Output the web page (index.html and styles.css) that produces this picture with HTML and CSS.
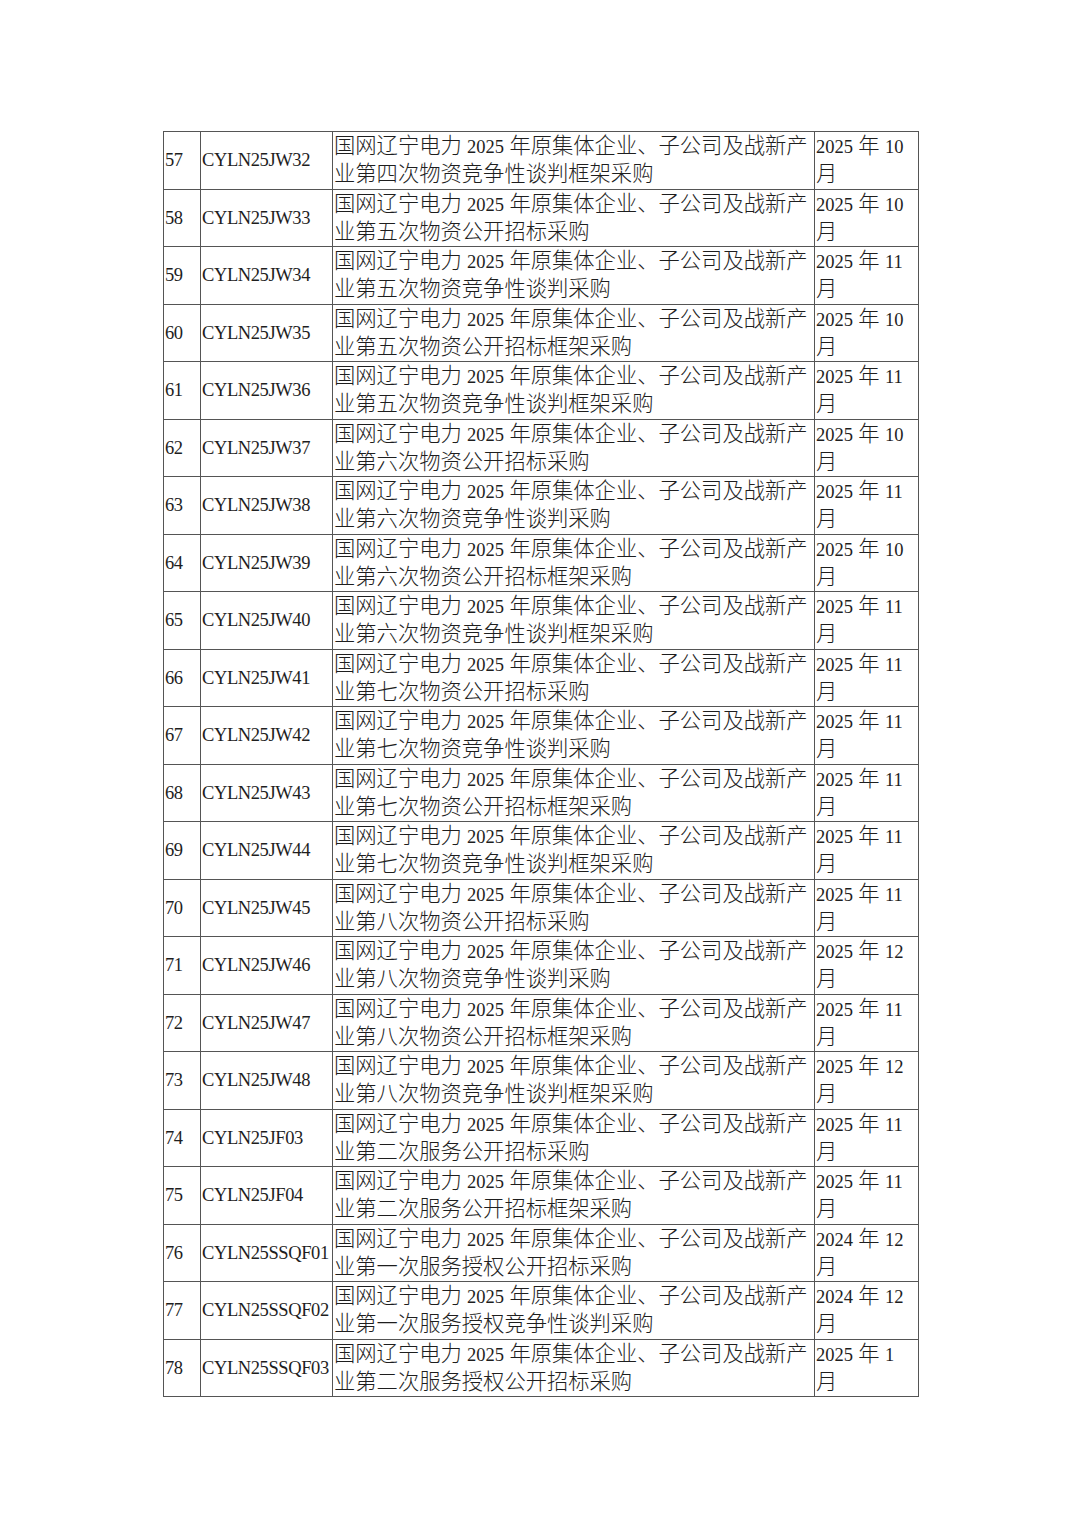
FILE: index.html
```html
<!DOCTYPE html>
<html lang="zh">
<head>
<meta charset="utf-8">
<link rel="stylesheet" href="styles.css">
</head>
<body>
<div class="page">
<table class="plan">
<colgroup><col class="c-no"><col class="c-code"><col class="c-name"><col class="c-date"></colgroup>
<tbody>
<tr><td class="no">57</td><td class="code">CYLN25JW32</td><td class="name">国网辽宁电力 <span class="lat">2025</span> 年原集体企业、子公司及战新产<br>业第四次物资竞争性谈判框架采购</td><td class="date"><span class="lat">2025</span> 年 <span class="lat">10</span><br>月</td></tr>
<tr><td class="no">58</td><td class="code">CYLN25JW33</td><td class="name">国网辽宁电力 <span class="lat">2025</span> 年原集体企业、子公司及战新产<br>业第五次物资公开招标采购</td><td class="date"><span class="lat">2025</span> 年 <span class="lat">10</span><br>月</td></tr>
<tr><td class="no">59</td><td class="code">CYLN25JW34</td><td class="name">国网辽宁电力 <span class="lat">2025</span> 年原集体企业、子公司及战新产<br>业第五次物资竞争性谈判采购</td><td class="date"><span class="lat">2025</span> 年 <span class="lat">11</span><br>月</td></tr>
<tr><td class="no">60</td><td class="code">CYLN25JW35</td><td class="name">国网辽宁电力 <span class="lat">2025</span> 年原集体企业、子公司及战新产<br>业第五次物资公开招标框架采购</td><td class="date"><span class="lat">2025</span> 年 <span class="lat">10</span><br>月</td></tr>
<tr><td class="no">61</td><td class="code">CYLN25JW36</td><td class="name">国网辽宁电力 <span class="lat">2025</span> 年原集体企业、子公司及战新产<br>业第五次物资竞争性谈判框架采购</td><td class="date"><span class="lat">2025</span> 年 <span class="lat">11</span><br>月</td></tr>
<tr><td class="no">62</td><td class="code">CYLN25JW37</td><td class="name">国网辽宁电力 <span class="lat">2025</span> 年原集体企业、子公司及战新产<br>业第六次物资公开招标采购</td><td class="date"><span class="lat">2025</span> 年 <span class="lat">10</span><br>月</td></tr>
<tr><td class="no">63</td><td class="code">CYLN25JW38</td><td class="name">国网辽宁电力 <span class="lat">2025</span> 年原集体企业、子公司及战新产<br>业第六次物资竞争性谈判采购</td><td class="date"><span class="lat">2025</span> 年 <span class="lat">11</span><br>月</td></tr>
<tr><td class="no">64</td><td class="code">CYLN25JW39</td><td class="name">国网辽宁电力 <span class="lat">2025</span> 年原集体企业、子公司及战新产<br>业第六次物资公开招标框架采购</td><td class="date"><span class="lat">2025</span> 年 <span class="lat">10</span><br>月</td></tr>
<tr><td class="no">65</td><td class="code">CYLN25JW40</td><td class="name">国网辽宁电力 <span class="lat">2025</span> 年原集体企业、子公司及战新产<br>业第六次物资竞争性谈判框架采购</td><td class="date"><span class="lat">2025</span> 年 <span class="lat">11</span><br>月</td></tr>
<tr><td class="no">66</td><td class="code">CYLN25JW41</td><td class="name">国网辽宁电力 <span class="lat">2025</span> 年原集体企业、子公司及战新产<br>业第七次物资公开招标采购</td><td class="date"><span class="lat">2025</span> 年 <span class="lat">11</span><br>月</td></tr>
<tr><td class="no">67</td><td class="code">CYLN25JW42</td><td class="name">国网辽宁电力 <span class="lat">2025</span> 年原集体企业、子公司及战新产<br>业第七次物资竞争性谈判采购</td><td class="date"><span class="lat">2025</span> 年 <span class="lat">11</span><br>月</td></tr>
<tr><td class="no">68</td><td class="code">CYLN25JW43</td><td class="name">国网辽宁电力 <span class="lat">2025</span> 年原集体企业、子公司及战新产<br>业第七次物资公开招标框架采购</td><td class="date"><span class="lat">2025</span> 年 <span class="lat">11</span><br>月</td></tr>
<tr><td class="no">69</td><td class="code">CYLN25JW44</td><td class="name">国网辽宁电力 <span class="lat">2025</span> 年原集体企业、子公司及战新产<br>业第七次物资竞争性谈判框架采购</td><td class="date"><span class="lat">2025</span> 年 <span class="lat">11</span><br>月</td></tr>
<tr><td class="no">70</td><td class="code">CYLN25JW45</td><td class="name">国网辽宁电力 <span class="lat">2025</span> 年原集体企业、子公司及战新产<br>业第八次物资公开招标采购</td><td class="date"><span class="lat">2025</span> 年 <span class="lat">11</span><br>月</td></tr>
<tr><td class="no">71</td><td class="code">CYLN25JW46</td><td class="name">国网辽宁电力 <span class="lat">2025</span> 年原集体企业、子公司及战新产<br>业第八次物资竞争性谈判采购</td><td class="date"><span class="lat">2025</span> 年 <span class="lat">12</span><br>月</td></tr>
<tr><td class="no">72</td><td class="code">CYLN25JW47</td><td class="name">国网辽宁电力 <span class="lat">2025</span> 年原集体企业、子公司及战新产<br>业第八次物资公开招标框架采购</td><td class="date"><span class="lat">2025</span> 年 <span class="lat">11</span><br>月</td></tr>
<tr><td class="no">73</td><td class="code">CYLN25JW48</td><td class="name">国网辽宁电力 <span class="lat">2025</span> 年原集体企业、子公司及战新产<br>业第八次物资竞争性谈判框架采购</td><td class="date"><span class="lat">2025</span> 年 <span class="lat">12</span><br>月</td></tr>
<tr><td class="no">74</td><td class="code">CYLN25JF03</td><td class="name">国网辽宁电力 <span class="lat">2025</span> 年原集体企业、子公司及战新产<br>业第二次服务公开招标采购</td><td class="date"><span class="lat">2025</span> 年 <span class="lat">11</span><br>月</td></tr>
<tr><td class="no">75</td><td class="code">CYLN25JF04</td><td class="name">国网辽宁电力 <span class="lat">2025</span> 年原集体企业、子公司及战新产<br>业第二次服务公开招标框架采购</td><td class="date"><span class="lat">2025</span> 年 <span class="lat">11</span><br>月</td></tr>
<tr><td class="no">76</td><td class="code">CYLN25SSQF01</td><td class="name">国网辽宁电力 <span class="lat">2025</span> 年原集体企业、子公司及战新产<br>业第一次服务授权公开招标采购</td><td class="date"><span class="lat">2024</span> 年 <span class="lat">12</span><br>月</td></tr>
<tr><td class="no">77</td><td class="code">CYLN25SSQF02</td><td class="name">国网辽宁电力 <span class="lat">2025</span> 年原集体企业、子公司及战新产<br>业第一次服务授权竞争性谈判采购</td><td class="date"><span class="lat">2024</span> 年 <span class="lat">12</span><br>月</td></tr>
<tr><td class="no">78</td><td class="code">CYLN25SSQF03</td><td class="name">国网辽宁电力 <span class="lat">2025</span> 年原集体企业、子公司及战新产<br>业第二次服务授权公开招标采购</td><td class="date"><span class="lat">2025</span> 年 <span class="lat">1</span><br>月</td></tr>
</tbody>
</table>
</div>
</body>
</html>
```

FILE: styles.css
```css
html, body {
  margin: 0;
  padding: 0;
  background: #ffffff;
}

.page {
  padding: 131px 0 0 163px;
}

.plan {
  border-collapse: collapse;
  table-layout: fixed;
  width: 755px;
  font-family: "Liberation Serif", "Noto Sans CJK SC", serif;
  font-weight: 300;
  font-size: 21.3px;
  color: #1e1e1e;
}

.c-no { width: 37px; }
.c-code { width: 132px; }
.c-name { width: 482px; }
.c-date { width: 104px; }

.plan td {
  border: 1px solid #555;
  height: 56.5px;
  padding: 0 0 0 1px;
  line-height: 28.25px;
  vertical-align: middle;
  white-space: nowrap;
  overflow: hidden;
}

.plan td.no,
.plan td.code {
  font-size: 18.5px;
  font-weight: 400;
  letter-spacing: -0.4px;
}

.lat {
  font-size: 18.5px;
  font-weight: 400;
  line-height: 1;
}
```
